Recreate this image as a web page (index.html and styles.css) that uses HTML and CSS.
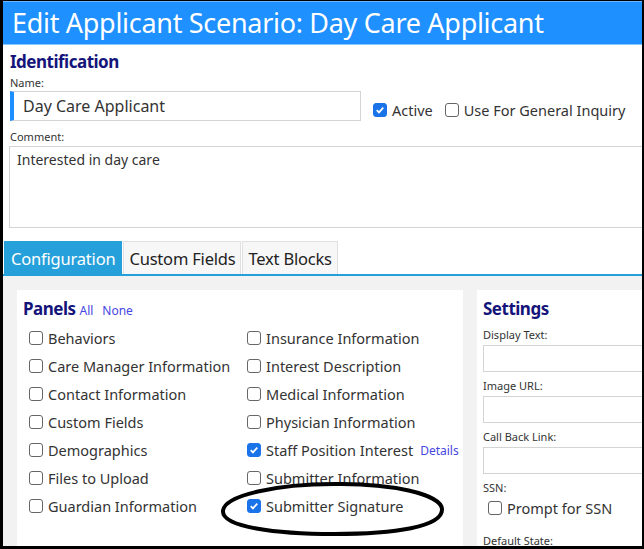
FILE: index.html
```html
<!DOCTYPE html>
<html lang="en">
<head>
    <meta charset="UTF-8">
    <meta name="viewport" content="width=device-width, initial-scale=1.0">
    <title>Edit Applicant Scenario</title>
    <link rel="stylesheet" href="styles.css">
</head>
<body>
    <div class="window">
        <div class="title-bar">Edit Applicant Scenario: Day Care Applicant</div>

        <div class="identification">
            <h2>Identification</h2>
            <div class="field-label">Name:</div>
            <div class="name-row">
                <div class="text-input name-input">Day Care Applicant</div>
                <div class="check">
                    <span class="box checked"><svg viewBox="0 0 14 14"><path d="M3.2 7.2l2.6 2.6 5-5.6" /></svg></span>Active
                </div>
                <div class="check">
                    <span class="box"></span>Use For General Inquiry
                </div>
            </div>
            <div class="field-label comment-label">Comment:</div>
            <div class="comment-box">Interested in day care</div>
        </div>

        <div class="tabs">
            <div class="tab active">Configuration</div>
            <div class="tab">Custom Fields</div>
            <div class="tab">Text Blocks</div>
        </div>

        <div class="tab-body">
            <div class="card panels-card">
                <h3>Panels <a href="#">All</a> <a href="#">None</a></h3>
                <div class="panel-list">
                    <div class="check"><span class="box"></span>Behaviors</div>
                    <div class="check"><span class="box"></span>Insurance Information</div>
                    <div class="check"><span class="box"></span>Care Manager Information</div>
                    <div class="check"><span class="box"></span>Interest Description</div>
                    <div class="check"><span class="box"></span>Contact Information</div>
                    <div class="check"><span class="box"></span>Medical Information</div>
                    <div class="check"><span class="box"></span>Custom Fields</div>
                    <div class="check"><span class="box"></span>Physician Information</div>
                    <div class="check"><span class="box"></span>Demographics</div>
                    <div class="check">
                        <span class="box checked"><svg viewBox="0 0 14 14"><path d="M3.2 7.2l2.6 2.6 5-5.6" /></svg></span>Staff Position Interest
                        <a href="#" class="details">Details</a>
                    </div>
                    <div class="check"><span class="box"></span>Files to Upload</div>
                    <div class="check"><span class="box"></span>Submitter Information</div>
                    <div class="check"><span class="box"></span>Guardian Information</div>
                    <div class="check">
                        <span class="box checked"><svg viewBox="0 0 14 14"><path d="M3.2 7.2l2.6 2.6 5-5.6" /></svg></span>Submitter Signature
                    </div>
                </div>
            </div>

            <div class="card settings-card">
                <h3>Settings</h3>
                <div class="field-label">Display Text:</div>
                <div class="text-input setting-input"></div>
                <div class="field-label">Image URL:</div>
                <div class="text-input setting-input"></div>
                <div class="field-label">Call Back Link:</div>
                <div class="text-input setting-input"></div>
                <div class="field-label">SSN:</div>
                <div class="check ssn-check"><span class="box"></span>Prompt for SSN</div>
                <div class="field-label">Default State:</div>
            </div>

            <!-- hand-drawn circle marking the signature option -->
            <svg class="marker" viewBox="0 0 226 56" width="226" height="56">
                <path d="M114 3 C 58 3, 4 14, 3 30 C 2 46, 56 53, 114 53 C 174 53, 223 46, 222 28 C 221 13, 170 2, 114 3 Z" />
            </svg>
        </div>
    </div>
</body>
</html>
```

FILE: styles.css
```css
* {
    box-sizing: border-box;
}

body {
    margin: 0;
    font-family: "Noto Sans", "Open Sans", sans-serif;
    color: #333;
    background: #fff;
}

.window {
    width: 644px;
    height: 549px;
    border-style: solid;
    border-color: #000;
    border-width: 1px 2px 3px 3px;
    overflow: hidden;
    display: flex;
    flex-direction: column;
    background: #fff;
}

.title-bar {
    background: #1e90ff;
    color: #fff;
    font-size: 27px;
    letter-spacing: -0.3px;
    line-height: 42px;
    padding: 0 9px;
    border-top: 1px solid #6db6ff;
    border-bottom: 1px solid #8cc6ff;
    white-space: nowrap;
}

.identification {
    padding: 6px 0 13px 7px;
}

h2 {
    margin: 0;
    font-size: 17px;
    letter-spacing: -0.5px;
    font-weight: bold;
    color: #14147a;
    line-height: 22px;
}

.field-label {
    font-size: 11px;
    line-height: 14px;
    color: #333;
    margin-top: 3px;
}

.comment-label {
    margin-top: 9px;
}

.name-row {
    display: flex;
    align-items: center;
    gap: 12px;
    margin-top: 1px;
}

.text-input {
    border: 1px solid #d4d4d4;
    background: #fff;
}

.name-input {
    width: 351px;
    height: 30px;
    border-left: 4px solid #1e90ff;
    padding-left: 9px;
    font-size: 16px;
    line-height: 28px;
    color: #333;
    flex-shrink: 0;
}

.name-row .check {
    margin-top: 8px;
}

.check {
    display: flex;
    align-items: center;
    font-size: 14.5px;
    color: #333;
    white-space: nowrap;
}

.box {
    width: 14px;
    height: 14px;
    border: 1px solid #666;
    border-radius: 3px;
    margin-right: 5px;
    flex-shrink: 0;
    display: inline-flex;
    background: #fff;
}

.box.checked {
    background: #1a73e8;
    border-color: #1a73e8;
}

.box svg {
    width: 12px;
    height: 12px;
}

.box svg path {
    fill: none;
    stroke: #fff;
    stroke-width: 2;
}

.comment-box {
    width: 700px;
    height: 82px;
    margin-left: -1px;
    margin-top: 2px;
    border: 1px solid #d4d4d4;
    padding: 4px 7px;
    font-size: 14px;
    line-height: 18px;
}

.tabs {
    display: flex;
    gap: 1px;
    padding-left: 1px;
    border-bottom: 2px solid #26a0da;
}

.tab {
    height: 33px;
    padding: 0 5px;
    font-size: 16.5px;
    letter-spacing: -0.2px;
    line-height: 33px;
    background: #f7f7f7;
    border: 1px solid #e0e0e0;
    border-bottom: none;
    color: #222;
}

.tab.active {
    background: #26a0da;
    border-color: #26a0da;
    color: #fff;
    padding: 0 6px;
}

.tab-body {
    flex: 1;
    position: relative;
    background: #f2f2f2;
    display: flex;
    gap: 14px;
    padding: 14px 0 0 14px;
}

.card {
    background: #fff;
    padding: 8px 6px;
}

.card h3 {
    margin: 0;
    font-size: 17px;
    letter-spacing: -0.5px;
    line-height: 22px;
    color: #14147a;
}

.card h3 a {
    font-size: 12px;
    letter-spacing: 0;
    font-weight: normal;
    color: #4646e0;
    text-decoration: none;
}

.card h3 a + a {
    margin-left: 5px;
}

.panels-card {
    width: 446px;
    flex-shrink: 0;
}

.panel-list {
    display: grid;
    grid-template-columns: 218px auto;
    grid-auto-rows: 28px;
    margin: 2px 0 0 6px;
}

.details {
    font-size: 12px;
    color: #4646e0;
    text-decoration: none;
    margin-left: 7px;
}

.settings-card {
    width: 200px;
    flex-shrink: 0;
}

.settings-card h3 {
    margin-bottom: 8px;
}

.settings-card .field-label {
    margin-top: 0;
}

.setting-input {
    height: 27px;
    margin: 3px 0 7px;
}

.ssn-check {
    margin: 3px 0 16px 5px;
}

.marker {
    position: absolute;
    left: 217px;
    top: 205px;
}

.marker path {
    fill: none;
    stroke: #000;
    stroke-width: 4;
}
```
